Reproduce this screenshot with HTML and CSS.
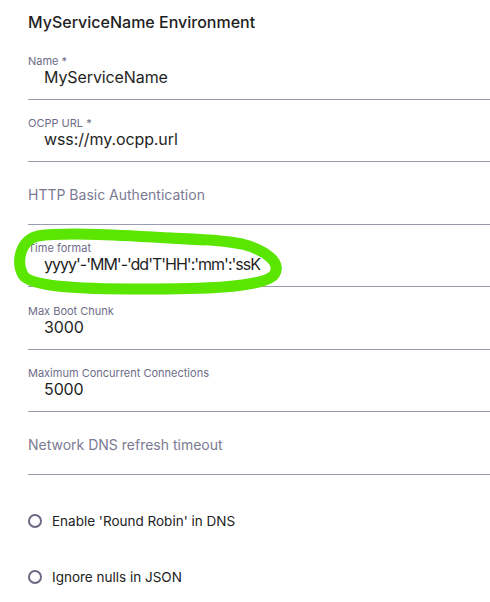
FILE: index.html
```html
<!DOCTYPE html>
<html lang="en">
<head>
<meta charset="utf-8">
<title>MyServiceName Environment</title>
<link rel="stylesheet" href="styles.css">
</head>
<body>
<div class="page">
  <h1 class="title">MyServiceName Environment</h1>
  <div class="field">
    <label class="label">Name *</label>
    <div class="value">MyServiceName</div>
  </div>
  <div class="field">
    <label class="label">OCPP URL *</label>
    <div class="value">wss://my.ocpp.url</div>
  </div>
  <div class="field field-empty">
    <div class="placeholder">HTTP Basic Authentication</div>
  </div>
  <div class="field">
    <label class="label">Time format</label>
    <div class="value value-tight">yyyy'-'MM'-'dd'T'HH':'mm':'ssK</div>
  </div>
  <div class="field">
    <label class="label">Max Boot Chunk</label>
    <div class="value">3000</div>
  </div>
  <div class="field">
    <label class="label">Maximum Concurrent Connections</label>
    <div class="value">5000</div>
  </div>
  <div class="field field-empty">
    <div class="placeholder">Network DNS refresh timeout</div>
  </div>
  <div class="options">
    <div class="radio-row"><span class="radio"></span><span class="radio-text">Enable 'Round Robin' in DNS</span></div>
    <div class="radio-row"><span class="radio"></span><span class="radio-text">Ignore nulls in JSON</span></div>
  </div>
  <svg class="annotation" width="490" height="602" viewBox="0 0 490 602" aria-hidden="true">
    <path d="M 205 240 C 150 237, 70 231, 38 236 C 20 240, 16 262, 23 275 C 31 287, 80 289, 140 289 C 200 289, 258 288, 273 276 C 284 264, 266 250, 242 244 C 222 240, 200 239, 170 238" fill="none" stroke="#5ae600" stroke-width="11" stroke-linecap="round" stroke-linejoin="round"/>
  </svg>
</div>
</body>
</html>
```
FILE: styles.css
```css
html, body {
  margin: 0;
  padding: 0;
  background: #ffffff;
}
body {
  font-family: Inter, "Noto Sans", "Liberation Sans", sans-serif;
  color: #222222;
}
.page {
  position: relative;
  width: 490px;
  height: 602px;
  overflow: hidden;
  padding-left: 28px;
  box-sizing: border-box;
}
.title {
  margin: 0;
  padding-top: 10px;
  height: 37px;
  box-sizing: border-box;
  font-size: 16px;
  line-height: 24px;
  font-weight: 500;
  color: #1f1f1f;
}
.field {
  height: 62.5px;
  box-sizing: border-box;
  border-bottom: 1px solid #9b9aae;
  padding-top: 17.5px;
  display: flex;
  flex-direction: column;
}
.label {
  font-size: 11px;
  line-height: 13px;
  color: #6e6c88;
}
.value {
  margin-top: -1px;
  padding-left: 16px;
  font-size: 16px;
  line-height: 20px;
  font-weight: 400;
  color: #1f1f1f;
  letter-spacing: -0.1px;
}
.value-tight {
  letter-spacing: -1px;
}
.field-empty {
  padding-top: 24px;
}
.placeholder {
  font-size: 14px;
  line-height: 18px;
  color: #7b7a93;
}
.options {
  display: flex;
  flex-direction: column;
  gap: 36px;
  padding-top: 36px;
}
.radio-row {
  display: flex;
  align-items: center;
  gap: 10px;
  height: 20px;
}
.radio {
  width: 14px;
  height: 14px;
  box-sizing: border-box;
  border: 2px solid #6a6986;
  border-radius: 50%;
}
.radio-text {
  font-size: 13.5px;
  line-height: 20px;
  color: #222222;
}
.annotation {
  position: absolute;
  left: 0;
  top: 0;
  pointer-events: none;
}
```
